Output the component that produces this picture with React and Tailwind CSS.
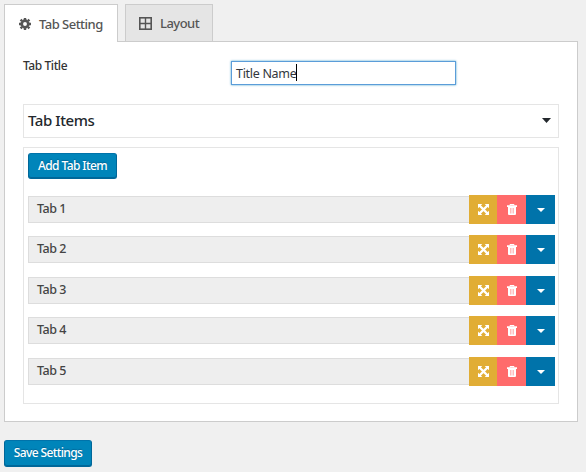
import React from 'react';

const tabs = [
  { name: 'Tab 1', gap: '' },
  { name: 'Tab 2', gap: 'mt-[11px]' },
  { name: 'Tab 3', gap: 'mt-3' },
  { name: 'Tab 4', gap: 'mt-[11px]' },
  { name: 'Tab 5', gap: 'mt-3' },
];

function Gear() {
  return (
    <svg className="h-3 w-3 shrink-0" viewBox="0 0 12 12" fill="none">
      <circle cx="6" cy="6" r="3.3" stroke="#555" strokeWidth="2.7" />
      <path d="M6 0v2M6 10v2M0 6h2M10 6h2M1.6 1.6l1.4 1.4M9 9l1.4 1.4M1.6 10.4L3 9M9 3l1.4-1.4" stroke="#555" strokeWidth="2.4" />
    </svg>
  );
}

function GridIcon() {
  return (
    <svg className="h-[13px] w-[13px] shrink-0" viewBox="0 0 13 13" fill="none" stroke="#555">
      <rect x="0.8" y="0.8" width="11.4" height="11.4" strokeWidth="1.6" />
      <path d="M6.5 1v11M1 6.5h11" strokeWidth="1.4" />
    </svg>
  );
}

function Expand() {
  return (
    <svg className="h-[11px] w-[11px]" viewBox="0 0 11 11">
      <path d="M0 0h4.3L0 4.3zM11 0v4.3L6.7 0zM0 11V6.7L4.3 11zM11 11H6.7L11 6.7z" fill="#fff" />
      <path d="M1.5 1.5l8 8M9.5 1.5l-8 8" stroke="#fff" strokeWidth="2.4" />
    </svg>
  );
}

function Trash() {
  return (
    <svg className="h-[11px] w-[10px]" viewBox="0 0 10 11">
      <path d="M3 1.5V.5h4v1" fill="none" stroke="#fff" strokeWidth="1" />
      <path d="M0 1.2h10v1.8H0zM1 2.5h8V10a1 1 0 0 1-1 1H2a1 1 0 0 1-1-1z" fill="#fff" />
      <path d="M3.5 4v5.5M5 4v5.5M6.5 4v5.5" stroke="#ff6b6b" strokeWidth="0.45" />
    </svg>
  );
}

function Row({ name, gap }) {
  return (
    <div className={`flex h-[29px] items-center ${gap}`}>
      <div className="flex h-[27px] w-[441px] items-center border border-r-0 border-[#ddd] bg-[#eee] pl-2 text-[12.5px] font-medium leading-4 tracking-[-0.5px] text-[#444]">
        <span className="-mt-px">{name}</span>
      </div>
      <div className="flex h-[29px] w-7 items-center justify-center bg-[#e1ad35]"><Expand /></div>
      <div className="flex h-[29px] w-[29px] items-center justify-center bg-[#ff6b6b]"><Trash /></div>
      <div className="flex h-[29px] w-[29px] items-center justify-center bg-[#0073aa]">
        <svg className="h-1 w-2" viewBox="0 0 8 4"><path d="M0 0h8L4 4z" fill="#fff" /></svg>
      </div>
    </div>
  );
}

function Button({ className, children }) {
  return (
    <button className={`flex items-center justify-center whitespace-nowrap rounded-[3px] border border-[#006799] border-t-[#0073aa] bg-[#0085ba] font-medium leading-4 text-white shadow-[inset_0_-1px_0_#006799] [text-shadow:0_-1px_1px_#006799] ${className}`}>
      {children}
    </button>
  );
}

export default function App() {
  return (
    <main className="h-[472px] w-[586px] overflow-hidden bg-[#f0f0f0] pl-1 pt-1 font-['Noto_Sans',sans-serif] text-[#444]">
      <nav className="relative z-10 -mb-px flex h-[38px] items-start font-medium text-[#555]">
        <div className="flex h-[38px] w-[114px] items-center border border-b-0 border-[#ccc] bg-white pl-3.5">
          <Gear />
          <span className="ml-2 whitespace-nowrap pt-0.5 text-[13px] tracking-[-0.52px]">Tab Setting</span>
        </div>
        <div className="ml-[7px] flex h-[38px] w-[88px] items-center border border-[#ccc] bg-[#e5e5e5] pl-[13px]">
          <GridIcon />
          <span className="ml-2 pt-0.5 text-[13px] tracking-[-0.52px]">Layout</span>
        </div>
      </nav>
      <section className="h-[381px] w-[574px] border border-[#ccc] bg-white pl-[18px] pt-[19px]">
        <div className="flex h-6 items-start">
          <label className="w-[208px] pt-px text-[12px] font-medium leading-[8px] tracking-[-0.42px] text-[#333]">Tab Title</label>
          <div className="flex h-6 w-[225px] items-center border border-[#5b9dd9] bg-white pl-1 text-[12.5px] tracking-[-0.3px] text-[#32373c] shadow-[0_0_2px_rgba(30,140,190,0.8)]">
            <span className="whitespace-nowrap pt-0.5">Title Name</span>
            <i className="mb-px h-[17px] w-px bg-black" />
          </div>
        </div>
        <header className="mt-[19px] flex h-[34px] w-[536px] items-center justify-between border border-[#e5e5e5] pl-1 pr-[7px] text-[15px] font-medium tracking-[-0.42px] text-[#23282d]">
          <h2 className="-mt-0.5">Tab Items</h2>
          <svg className="-mt-px h-[5px] w-[9px]" viewBox="0 0 9 5"><path d="M0 0h9L4.5 5z" fill="#23282d" /></svg>
        </header>
        <div className="mt-[9px] h-[257px] w-[536px] border border-[#e5e5e5] pl-1 pt-[5px]">
          <Button className="h-[26px] w-[89px] text-[12px] tracking-[-0.6px]">Add Tab Item</Button>
          <div className="mt-4">
            {tabs.map((tab) => <Row key={tab.name} {...tab} />)}
          </div>
        </div>
      </section>
      <Button className="mt-[18px] h-[27px] w-[88px] pb-px text-[12px] tracking-[-0.6px]">Save Settings</Button>
    </main>
  );
}
